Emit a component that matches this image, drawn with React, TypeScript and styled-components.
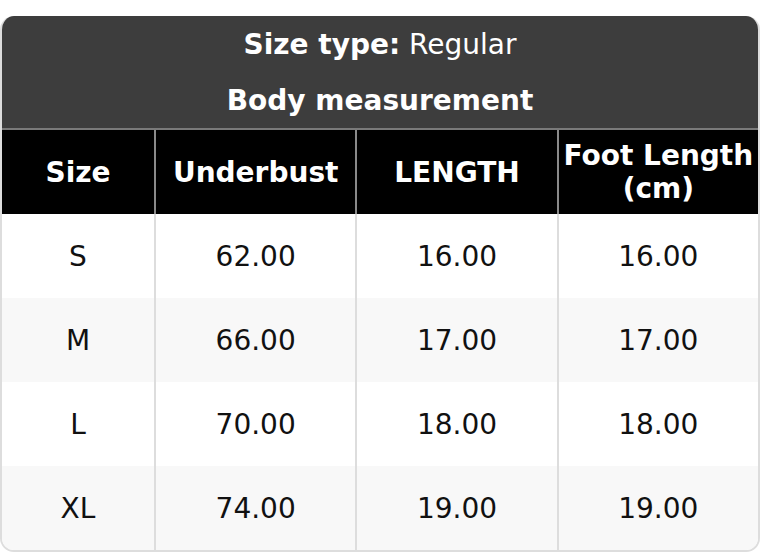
import React from 'react'
import styled, { createGlobalStyle } from 'styled-components'

const GlobalStyle = createGlobalStyle`
  html, body {
    margin: 0;
    padding: 0;
    background: #ffffff;
    font-family: "DejaVu Sans", "Liberation Sans", sans-serif;
  }
`

const rows = [
  { size: 'S', underbust: '62.00', length: '16.00', foot: '16.00' },
  { size: 'M', underbust: '66.00', length: '17.00', foot: '17.00' },
  { size: 'L', underbust: '70.00', length: '18.00', foot: '18.00' },
  { size: 'XL', underbust: '74.00', length: '19.00', foot: '19.00' },
]

const App = () => {
  return (
    <Page>
      <GlobalStyle />
      <Card>
        <Title>
          <TitleLine>
            <span>
              <b>Size type:</b> Regular
            </span>
          </TitleLine>
          <TitleLine>
            <b>Body measurement</b>
          </TitleLine>
        </Title>
        <Grid>
          <HeadCell>Size</HeadCell>
          <HeadCell>Underbust</HeadCell>
          <HeadCell>LENGTH</HeadCell>
          <HeadCell>Foot Length (cm)</HeadCell>
          {rows.map((r, i) => (
            <React.Fragment key={r.size}>
              <Cell $alt={i % 2 === 1}>{r.size}</Cell>
              <Cell $alt={i % 2 === 1}>{r.underbust}</Cell>
              <Cell $alt={i % 2 === 1}>{r.length}</Cell>
              <Cell $alt={i % 2 === 1}>{r.foot}</Cell>
            </React.Fragment>
          ))}
        </Grid>
      </Card>
    </Page>
  )
}

export default App

const Page = styled.div`
  padding-top: 16px;
  width: 760px;
`
const Card = styled.div`
  border-radius: 14px;
  overflow: hidden;
  border: 2px solid #dddddd;
  border-top: none;
  background: #ffffff;
`
const Title = styled.div`
  background: #3d3d3d;
  color: #ffffff;
  display: flex;
  flex-direction: column;
  border-bottom: 2px solid #7a7a7a;
  margin: 0 -2px;
`
const TitleLine = styled.div`
  height: 56px;
  display: flex;
  align-items: center;
  justify-content: center;
  font-size: 28px;
  b {
    font-weight: bold;
  }
`
const Grid = styled.div`
  display: grid;
  grid-template-columns: 152px 1fr 1fr 1fr;
`
const HeadCell = styled.div`
  background: #000000;
  color: #ffffff;
  font-weight: bold;
  font-size: 28px;
  height: 84px;
  display: flex;
  align-items: center;
  justify-content: center;
  text-align: center;
  padding: 0 4px;
  box-sizing: border-box;
  & + & {
    border-left: 2px solid #8a8a8a;
  }
`
const Cell = styled.div<{ $alt: boolean }>`
  background: ${(p) => (p.$alt ? '#f8f8f8' : '#ffffff')};
  color: #111111;
  font-size: 28px;
  height: 84px;
  display: flex;
  align-items: center;
  justify-content: center;
  box-sizing: border-box;
  &:not(:nth-child(4n + 1)) {
    border-left: 2px solid #dddddd;
  }
`
